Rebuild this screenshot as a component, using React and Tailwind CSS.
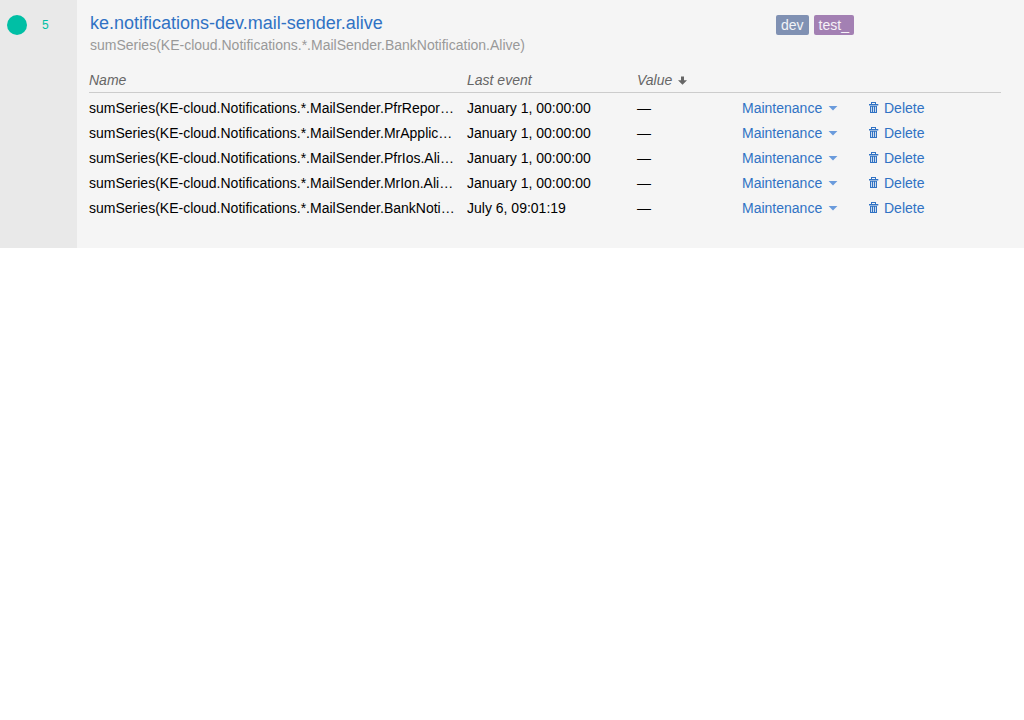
import React from "react";

const metrics = [
  { name: "sumSeries(KE-cloud.Notifications.*.MailSender.PfrRepor…", event: "January 1, 00:00:00" },
  { name: "sumSeries(KE-cloud.Notifications.*.MailSender.MrApplic…", event: "January 1, 00:00:00" },
  { name: "sumSeries(KE-cloud.Notifications.*.MailSender.PfrIos.Ali…", event: "January 1, 00:00:00" },
  { name: "sumSeries(KE-cloud.Notifications.*.MailSender.MrIon.Ali…", event: "January 1, 00:00:00" },
  { name: "sumSeries(KE-cloud.Notifications.*.MailSender.BankNoti…", event: "July 6, 09:01:19" },
];

function SortArrow() {
  return (
    <svg className="mt-px ml-[6px] h-[9px] w-[9px]" viewBox="0 0 9 9" fill="#666666">
      <path d="M3 0.5h3v3.7h3L4.5 8.7 0 4.2h3z" />
    </svg>
  );
}

function Caret() {
  return (
    <svg className="mt-px ml-[6px] h-[5px] w-[10px]" viewBox="0 0 10 5" fill="#6a9bdc">
      <path d="M0.6 0h8.8L5 4.5z" />
    </svg>
  );
}

function Trash() {
  return (
    <svg className="mr-[5px] h-[11px] w-[10px]" viewBox="0 0 10 11" fill="#3072c4">
      <path
        fillRule="evenodd"
        d="M2 0h5v2h2.3v1.5H0V2h2zM3 1v1h3V1zM1 4h7v7H1zM2 4.8v5.2h.8V4.8zM4.1 4.8v5.2h.8V4.8zM6.2 4.8v5.2h.8V4.8z"
      />
    </svg>
  );
}

function MetricRow({ name, event }) {
  return (
    <div className="flex h-[25px] items-center text-black">
      <div className="w-[378px] whitespace-nowrap">{name}</div>
      <div className="w-[170px]">{event}</div>
      <div className="w-[105px]">—</div>
      <button className="flex w-[127px] items-center text-[#3072c4]">
        Maintenance
        <Caret />
      </button>
      <button className="flex items-center text-[#3072c4]">
        <Trash />
        Delete
      </button>
    </div>
  );
}

export default function App() {
  return (
    <div className="min-h-[720px] bg-white font-['Liberation_Sans',Arial,sans-serif] text-[14px] leading-5">
      <div className="flex h-[248px] w-[1024px] bg-[#f5f5f5]">
        <div className="flex w-[77px] items-start bg-[#e9e9e9] pt-[15px] pl-[7px]">
          <div className="h-5 w-5 rounded-full bg-[#00bfa5]" />
          <div className="ml-[15px] text-[12px] leading-5 text-[#00bfa5]">5</div>
        </div>
        <div className="w-[924px] pt-3 pl-3">
          <div className="flex pl-px">
            <div className="w-[686px]">
              <div className="text-[18px] leading-[22px] text-[#3072c4]">ke.notifications-dev.mail-sender.alive</div>
              <div className="mt-px text-[#999999]">sumSeries(KE-cloud.Notifications.*.MailSender.BankNotification.Alive)</div>
            </div>
            <div className="mt-[3px] flex h-5 gap-[5px] text-white/90">
              <span className="rounded-[2px] bg-[#8091b3] px-[5px]">dev</span>
              <span className="rounded-[2px] bg-[#a380b3] px-[5px]">test_</span>
            </div>
          </div>
          <div className="mt-[15px] flex h-[23px] border-b border-[#cccccc] text-[#666666] italic">
            <div className="w-[378px]">Name</div>
            <div className="w-[170px]">Last event</div>
            <div className="flex h-5 items-center">
              Value
              <SortArrow />
            </div>
          </div>
          <div className="mt-[2px]">
            {metrics.map((m) => (
              <MetricRow key={m.name} {...m} />
            ))}
          </div>
        </div>
      </div>
    </div>
  );
}
